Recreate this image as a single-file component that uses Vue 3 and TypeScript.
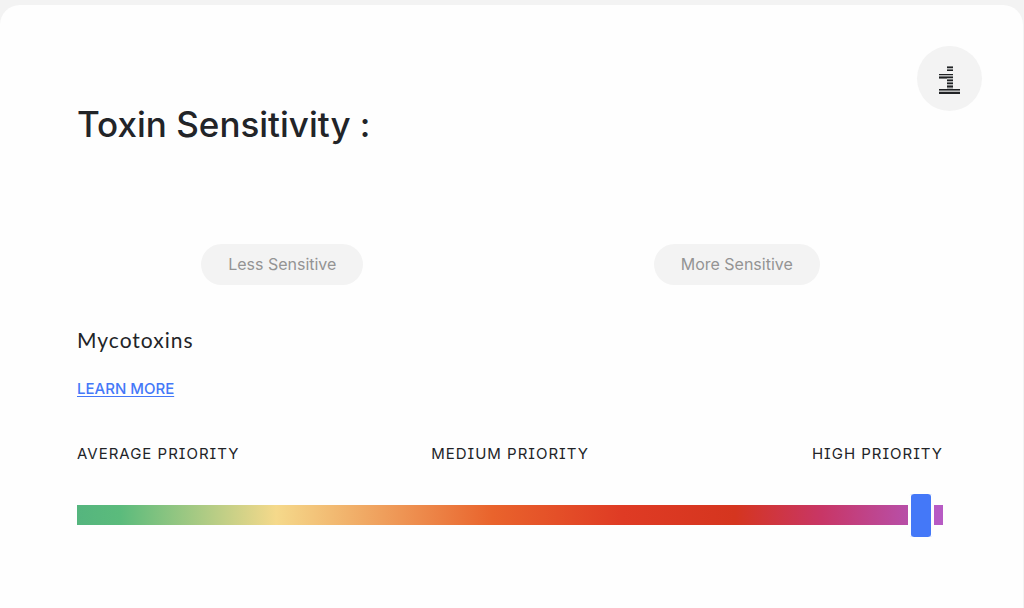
<script setup lang="ts">
import { ref } from 'vue'

const priority = ref<number>(989)
const levels: string[] = ['Average priority', 'Medium priority', 'High priority']
</script>

<template>
  <main class="card">
    <header class="head">
      <h1>Toxin Sensitivity :</h1>
      <button class="info" type="button" aria-label="Information">
        <svg viewBox="0 0 21 28" width="21" height="28" aria-hidden="true">
          <g fill="#77797a">
            <path d="M8 0h6v5H8zM0 8h14v5H0zM8 13h6v10H8zM0 23h21v5H0z" />
          </g>
          <g fill="#202224">
            <path d="M8 1h6v1H8zM8 4h6v1H8zM0 8h14v1H0zM0 11h14v1H0zM8 14h6v1H8zM8 17h6v1H8zM8 20h6v1H8zM0 23h21v1H0zM0 26h21v2H0z" />
          </g>
          <path fill="#b9babb" d="M8 2h6v1H8zM0 9h14v1H0zM8 12h6v1H8zM8 15h6v1H8zM8 18h6v1H8zM8 22h6v1H8zM0 25h21v1H0z" />
        </svg>
      </button>
    </header>

    <div class="choices">
      <button type="button">Less Sensitive</button>
      <button type="button">More Sensitive</button>
    </div>

    <section class="toxin">
      <h2><label for="priority">Mycotoxins</label></h2>
      <a href="#">LEARN MORE</a>
      <div class="levels">
        <span v-for="level in levels" :key="level">{{ level }}</span>
      </div>
      <input id="priority" v-model.number="priority" type="range" min="0" max="1000" />
    </section>
  </main>
</template>

<style>
body {
  background: #f3f3f3;
}
</style>

<style scoped>
.card {
  box-sizing: border-box;
  min-height: calc(100vh - 5px);
  margin: 5px 1px 0 0;
  padding: 41px 80px 60px 77px;
  border-radius: 20px 20px 0 0;
  background: #fefefe;
  color: #222428;
  font-family: Inter, "Liberation Sans", sans-serif;
}

.head {
  display: flex;
  justify-content: space-between;
  align-items: flex-start;
  margin-right: -39px;
}

h1 {
  margin: 56px 0 0;
  font-size: 35px;
  line-height: 44px;
  font-weight: 500;
}

.info {
  display: grid;
  place-items: center;
  width: 65px;
  height: 65px;
  padding: 2px 0 0;
  border: 0;
  border-radius: 50%;
  background: #f3f3f3;
}

.choices {
  display: grid;
  grid-template-columns: 1fr 1fr;
  justify-items: center;
  margin: 98px -21px 0 -22px;
}

.choices button {
  height: 41px;
  padding: 0 27px 2px;
  border: 0;
  border-radius: 21px;
  background: #f3f3f3;
  color: #949494;
  font: 400 16px/20px Inter, "Liberation Sans", sans-serif;
}

.toxin {
  margin-top: 41px;
}

h2 {
  margin: 0;
  font: 400 21px/28px Lato, sans-serif;
  letter-spacing: 1px;
}

a {
  display: inline-block;
  margin-top: 25px;
  color: #4478f8;
  font-size: 15px;
  font-weight: 500;
  line-height: 20px;
  text-decoration: underline;
  text-underline-offset: 2px;
}

.levels {
  display: grid;
  grid-template-columns: 1fr auto 1fr;
  margin-top: 45px;
  font-size: 15px;
  line-height: 20px;
  letter-spacing: 1px;
  text-transform: uppercase;
  font-feature-settings: "cv08", "ss02";
}

.levels span:last-child {
  text-align: right;
}

input {
  appearance: none;
  display: block;
  width: 100%;
  height: 20px;
  margin: 41px 0 0;
  background: linear-gradient(90deg, #55b57e 0%, #5bbb7c 5%, #f5d98b 23%, #e9632c 48%, #df3b24 63%, #d5351f 76%, #c83666 86%, #b84fa8 96%, #b75bc4 99%);
}

input::-webkit-slider-thumb {
  appearance: none;
  box-sizing: border-box;
  width: 26px;
  height: 43px;
  border: 0 solid #fefefe;
  border-width: 0 3px;
  border-radius: 6px / 3px;
  background: #4478f8;
}
</style>
